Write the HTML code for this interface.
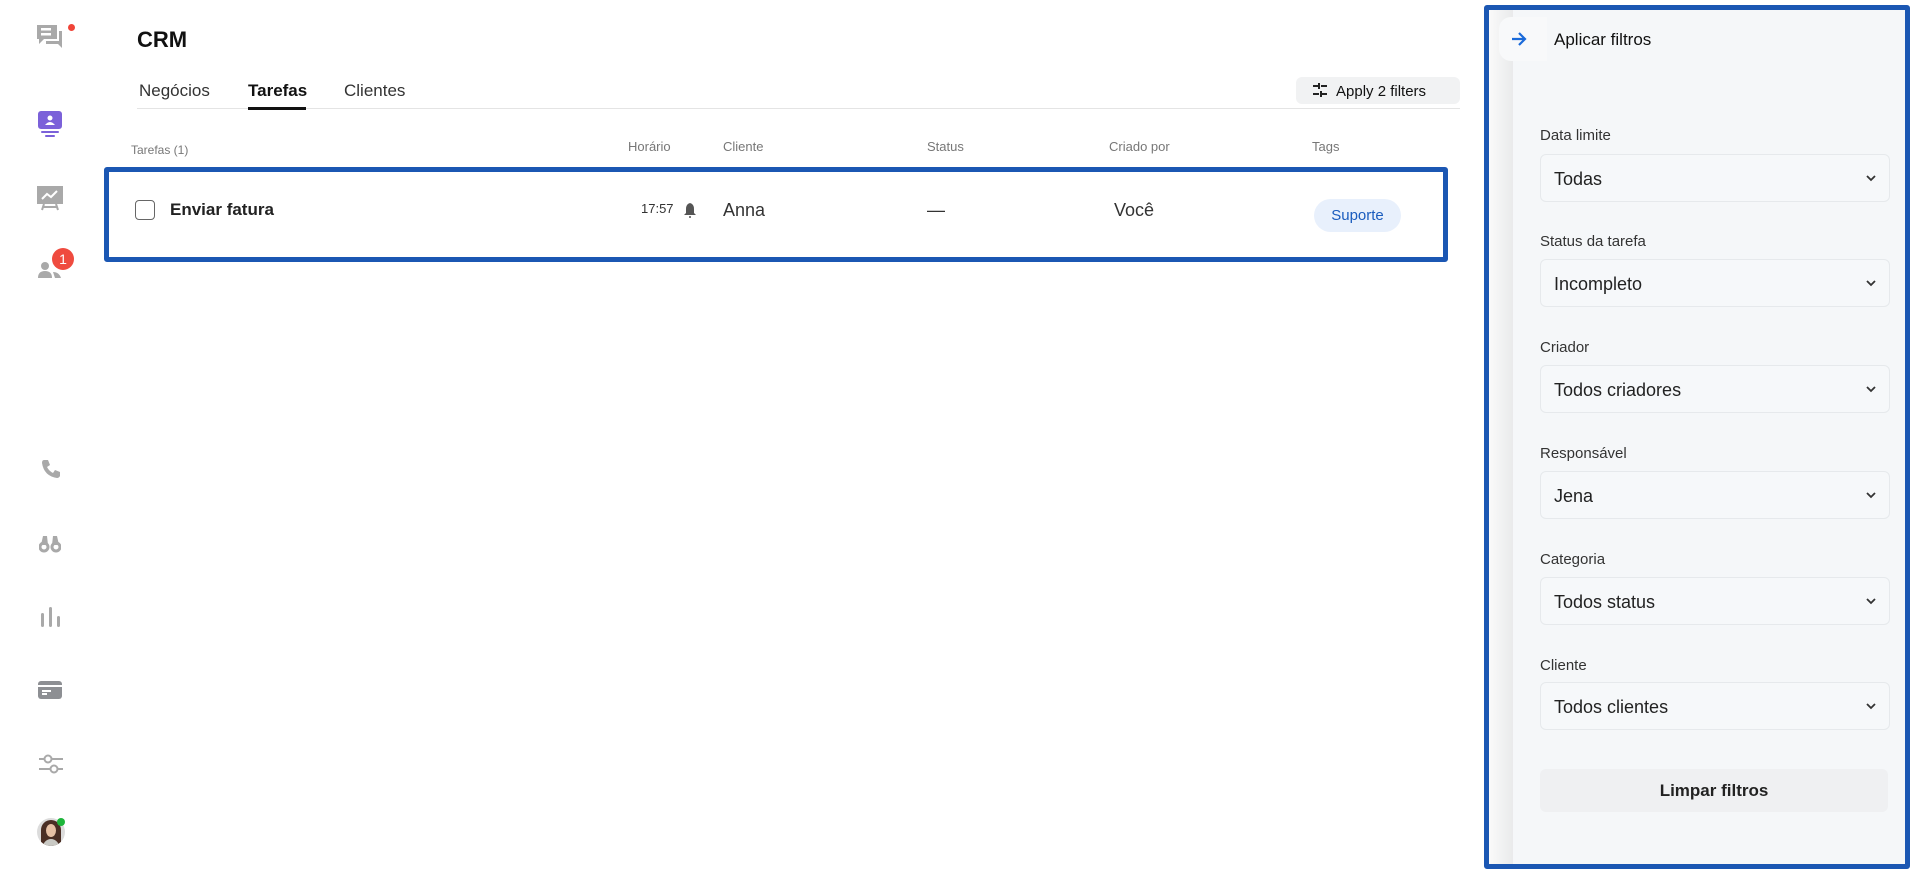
<!DOCTYPE html>
<html><head><meta charset="utf-8"><style>
*{box-sizing:border-box;margin:0;padding:0}
body{width:1913px;height:876px;background:#fff;font-family:"Liberation Sans",sans-serif;position:relative;overflow:hidden;color:#111}
.a{position:absolute}
.ic{position:absolute;left:36px}
.lbl{position:absolute;left:1540px;font-size:15px;color:#333}
.sel{position:absolute;left:1540px;width:350px;height:48px;border:1px solid #e6e9ec;border-radius:6px;background:#f6f8fa;font-size:18px;color:#222;padding:14px 13px}
.sel svg{position:absolute;right:12px;top:19px}
.hd{position:absolute;top:139px;font-size:13px;color:#777}
</style></head><body>
<!-- sidebar -->
<svg class="ic" style="top:24px" width="30" height="28" viewBox="0 0 30 28"><path d="M1 1h20v14H8l-5 5V15H1z" fill="#a9a9a9"/><rect x="5" y="4" width="10" height="2.5" fill="#fff"/><rect x="5" y="9" width="10" height="2.5" fill="#fff"/><path d="M23 7h3v17l-4-4H10v-3h13z" fill="#a9a9a9"/></svg>
<div class="a" style="left:68px;top:24px;width:7px;height:7px;border-radius:50%;background:#f04438"></div>
<svg class="ic" style="top:111px;left:38px" width="24" height="26" viewBox="0 0 24 26"><rect x="0" y="0" width="24" height="18" rx="3" fill="#7b61d9"/><circle cx="12" cy="7" r="2.5" fill="#fff"/><path d="M7 14q5-6 10 0z" fill="#fff"/><rect x="3" y="20" width="18" height="2" rx="1" fill="#7b61d9"/><rect x="7" y="24" width="10" height="2" rx="1" fill="#7b61d9"/></svg>
<svg class="ic" style="top:185px;left:37px" width="26" height="26" viewBox="0 0 26 26"><rect x="0" y="1" width="26" height="18" fill="#a9a9a9"/><path d="M5 14l5-5 4 3 6-6" stroke="#fff" stroke-width="2" fill="none"/><path d="M7 19l-2 6M19 19l2 6M6 22h14" stroke="#a9a9a9" stroke-width="2"/></svg>
<svg class="ic" style="top:260px;left:38px" width="26" height="20" viewBox="0 0 26 20"><circle cx="7" cy="6" r="4" fill="#a9a9a9"/><path d="M0 18q0-7 7-7t7 7z" fill="#a9a9a9"/><path d="M15 12q6 0 8 6h-6z" fill="#a9a9a9"/></svg>
<div class="a" style="left:52px;top:248px;width:22px;height:22px;border-radius:50%;background:#ef4b3f;color:#fff;font-size:14px;text-align:center;line-height:22px">1</div>
<svg class="ic" style="top:459px;left:41px" width="20" height="20" viewBox="0 0 20 20"><path d="M3 1l4 0 2 5-3 2q2 4 6 6l2-3 5 2v4q-1 2-3 2Q3 17 1 4q0-3 2-3z" fill="#a9a9a9"/></svg>
<svg class="ic" style="top:533px;left:39px" width="22" height="20" viewBox="0 0 22 20"><circle cx="5" cy="14" r="4" fill="none" stroke="#a9a9a9" stroke-width="3"/><circle cx="17" cy="14" r="4" fill="none" stroke="#a9a9a9" stroke-width="3"/><path d="M2 12l2-9h4l1 9M20 12l-2-9h-4l-1 9" fill="#a9a9a9"/></svg>
<svg class="ic" style="top:607px;left:40px" width="22" height="20" viewBox="0 0 22 20"><rect x="1" y="6" width="3" height="14" rx="1.5" fill="#a9a9a9"/><rect x="9" y="0" width="3" height="20" rx="1.5" fill="#a9a9a9"/><rect x="17" y="9" width="3" height="11" rx="1.5" fill="#a9a9a9"/></svg>
<svg class="ic" style="top:681px;left:38px" width="24" height="18" viewBox="0 0 24 18"><rect x="0" y="0" width="24" height="18" rx="3" fill="#8d8f93"/><rect x="0" y="4" width="24" height="2" fill="#fff"/><rect x="4" y="9" width="9" height="2" fill="#fff"/><rect x="4" y="12" width="5" height="2" fill="#fff"/></svg>
<svg class="ic" style="top:753px;left:39px" width="24" height="22" viewBox="0 0 24 22"><path d="M0 6h24M0 16h24" stroke="#a9a9a9" stroke-width="2"/><circle cx="9" cy="6" r="3.5" fill="#fff" stroke="#a9a9a9" stroke-width="2"/><circle cx="15" cy="16" r="3.5" fill="#fff" stroke="#a9a9a9" stroke-width="2"/></svg>
<div class="a" style="left:37px;top:818px;width:28px;height:28px;border-radius:50%;overflow:hidden;background:#dcdcdc"><div class="a" style="left:4px;top:2px;width:20px;height:26px;border-radius:10px 10px 0 0;background:#4a2e24"></div><div class="a" style="left:9px;top:6px;width:10px;height:13px;border-radius:50%;background:#e6c0a4"></div><div class="a" style="left:6px;top:21px;width:16px;height:8px;border-radius:8px 8px 0 0;background:#c9c9c4"></div></div>
<div class="a" style="left:57px;top:818px;width:8px;height:8px;border-radius:50%;background:#1db53a"></div>

<!-- main -->
<div class="a" style="left:137px;top:27px;font-size:22px;font-weight:bold">CRM</div>
<div class="a" style="left:139px;top:81px;font-size:17px;color:#333">Negócios</div>
<div class="a" style="left:248px;top:81px;font-size:17px;font-weight:bold">Tarefas</div>
<div class="a" style="left:344px;top:81px;font-size:17px;color:#333">Clientes</div>
<div class="a" style="left:137px;top:108px;width:1323px;height:1px;background:#e4e4e4"></div>
<div class="a" style="left:248px;top:107px;width:58px;height:3px;background:#111"></div>
<div class="a" style="left:1296px;top:77px;width:164px;height:27px;border-radius:6px;background:#f1f2f3;font-size:15px;padding:6px 0 0 40px">Apply 2 filters</div>
<svg class="a" style="left:1313px;top:83px" width="14" height="14" viewBox="0 0 14 14"><path d="M0 3h5M8 3h6M0 11h6M9 11h5M6 0v6M8 8v6" stroke="#222" stroke-width="2"/></svg>

<div class="hd" style="left:131px;top:143px;font-size:12px">Tarefas (1)</div>
<div class="hd" style="left:628px">Horário</div>
<div class="hd" style="left:723px">Cliente</div>
<div class="hd" style="left:927px">Status</div>
<div class="hd" style="left:1109px">Criado por</div>
<div class="hd" style="left:1312px">Tags</div>

<div class="a" style="left:104px;top:167px;width:1344px;height:95px;border:5px solid #1b57b3;border-radius:3px;background:#fff"></div>
<div class="a" style="left:135px;top:200px;width:20px;height:20px;border:1.5px solid #666;border-radius:4px"></div>
<div class="a" style="left:170px;top:200px;font-size:17px;font-weight:bold;color:#222">Enviar fatura</div>
<div class="a" style="left:641px;top:201px;font-size:13px;color:#333">17:57</div>
<svg class="a" style="left:684px;top:203px" width="12" height="15" viewBox="0 0 12 15"><path d="M6 0q4 1 4 6v4l2 2H0l2-2V6q0-5 4-6z" fill="#555"/><circle cx="6" cy="14" r="1" fill="#555"/></svg>
<div class="a" style="left:723px;top:200px;font-size:18px;color:#333">Anna</div>
<div class="a" style="left:927px;top:200px;font-size:18px;color:#333">—</div>
<div class="a" style="left:1114px;top:200px;font-size:18px;color:#333">Você</div>
<div class="a" style="left:1314px;top:199px;width:87px;height:33px;border-radius:17px;background:#e8f0fc;color:#1a5cbe;font-size:15px;text-align:center;line-height:33px">Suporte</div>

<!-- right panel -->
<div class="a" style="left:1484px;top:5px;width:426px;height:864px;border:5px solid #1b57b3;border-radius:3px;background:#f5f7f9"></div>
<div class="a" style="left:1489px;top:10px;width:24px;height:854px;background:linear-gradient(90deg,#fafafa,#e9eaeb)"></div>
<div class="a" style="left:1499px;top:17px;width:48px;height:44px;border-radius:12px 0 0 12px;background:#f8f9fa"></div>
<svg class="a" style="left:1511px;top:32px" width="16" height="14" viewBox="0 0 16 14"><path d="M1 7h13M8 1l6 6-6 6" stroke="#1a6ad9" stroke-width="2.2" fill="none"/></svg>
<div class="a" style="left:1554px;top:30px;font-size:17px;color:#111">Aplicar filtros</div>

<div class="lbl" style="top:127px">Data limite</div>
<div class="sel" style="top:154px">Todas<svg width="12" height="8" viewBox="0 0 12 8"><path d="M2 2l4 4 4-4" stroke="#333" stroke-width="1.8" fill="none"/></svg></div>
<div class="lbl" style="top:233px">Status da tarefa</div>
<div class="sel" style="top:259px">Incompleto<svg width="12" height="8" viewBox="0 0 12 8"><path d="M2 2l4 4 4-4" stroke="#333" stroke-width="1.8" fill="none"/></svg></div>
<div class="lbl" style="top:339px">Criador</div>
<div class="sel" style="top:365px">Todos criadores<svg width="12" height="8" viewBox="0 0 12 8"><path d="M2 2l4 4 4-4" stroke="#333" stroke-width="1.8" fill="none"/></svg></div>
<div class="lbl" style="top:445px">Responsável</div>
<div class="sel" style="top:471px">Jena<svg width="12" height="8" viewBox="0 0 12 8"><path d="M2 2l4 4 4-4" stroke="#333" stroke-width="1.8" fill="none"/></svg></div>
<div class="lbl" style="top:551px">Categoria</div>
<div class="sel" style="top:577px">Todos status<svg width="12" height="8" viewBox="0 0 12 8"><path d="M2 2l4 4 4-4" stroke="#333" stroke-width="1.8" fill="none"/></svg></div>
<div class="lbl" style="top:657px">Cliente</div>
<div class="sel" style="top:682px">Todos clientes<svg width="12" height="8" viewBox="0 0 12 8"><path d="M2 2l4 4 4-4" stroke="#333" stroke-width="1.8" fill="none"/></svg></div>
<div class="a" style="left:1540px;top:769px;width:348px;height:43px;border-radius:6px;background:#eff0f2;font-size:17px;font-weight:bold;color:#222;text-align:center;line-height:43px">Limpar filtros</div>
</body></html>
